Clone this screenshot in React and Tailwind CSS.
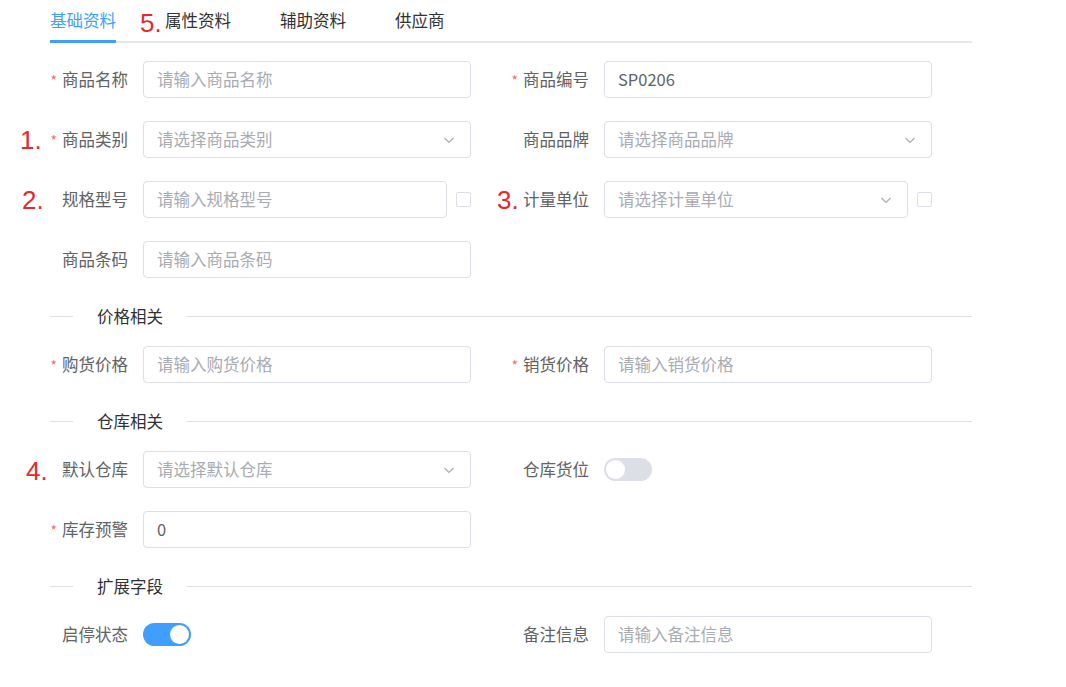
const font = { fontFamily: '"Noto Sans CJK SC", "Noto Sans", sans-serif' }

function Mark({ children, className }) {
  return (
    <span
      className={`absolute text-[26px] leading-none text-[#e8282b] ${className}`}
      style={{ fontFamily: '"Liberation Sans", Arial, sans-serif' }}
    >
      {children}
    </span>
  )
}

function Chevron() {
  return (
    <svg width="14" height="14" viewBox="0 0 14 14" className="text-[#a8abb2]">
      <polyline points="2.5,5 7,9.5 11.5,5" fill="none" stroke="currentColor" strokeWidth="1.2" />
    </svg>
  )
}

function Input({ placeholder, value, select, className = 'w-[328px]' }) {
  return (
    <div className={`${className} h-[37px] border border-[#dcdfe6] rounded-[4px] bg-white flex items-center pl-[13px] pr-[14px]`}>
      <span className={`flex-1 text-[16.5px] ${value ? 'text-[#606266]' : 'text-[#a8abb2]'}`}>
        {value || placeholder}
      </span>
      {select && <Chevron />}
    </div>
  )
}

function Checkbox() {
  return <div className="ml-[9px] w-[15px] h-[15px] border border-[#dcdfe6] rounded-[2px] bg-white" />
}

function Switch({ on }) {
  return (
    <div className={`w-[48px] h-[23px] rounded-full flex items-center px-[2px] ${on ? 'bg-[#409eff] justify-end' : 'bg-[#dcdfe6] justify-start'}`}>
      <div className="w-[19px] h-[19px] rounded-full bg-white" />
    </div>
  )
}

function Field({ label, required, mark, children }) {
  return (
    <div className="relative flex items-center h-[37px]">
      {mark}
      <div className="w-[93px] pr-[15px] text-right text-[16.5px] text-[#606266] whitespace-nowrap">
        {required && <span className="text-[#f56c6c] mr-[5px] text-[14px]">*</span>}
        {label}
      </div>
      <div className="flex items-center">{children}</div>
    </div>
  )
}

function Row({ children }) {
  return <div className="grid grid-cols-[421px_421px] gap-x-[40px] mb-[23px]">{children}</div>
}

function Divider({ title }) {
  return (
    <div className="flex items-center h-[30px] mb-[15px]">
      <div className="w-[23px] h-px bg-[#dcdfe6]" />
      <div className="px-[24px] text-[16.5px] text-[#303133]">{title}</div>
      <div className="flex-1 h-px bg-[#dcdfe6]" />
    </div>
  )
}

const tabs = ['基础资料', '属性资料', '辅助资料', '供应商']

export default function App() {
  return (
    <div className="w-[1066px] h-[687px] overflow-hidden bg-white" style={font}>
      <div className="ml-[50px] w-[922px]">
        {/* 标签页 */}
        <div className="relative flex gap-[49px] h-[43px] border-b-2 border-[#e4e7ed]">
          {tabs.map((t, i) => (
            <div
              key={t}
              className={`relative flex items-center h-[43px] -mb-[2px] text-[16.5px] ${
                i === 0 ? 'text-[#409eff] border-b-[3px] border-[#409eff] pt-[1px]' : 'text-[#303133] border-b-2 border-transparent'
              }`}
            >
              {i === 1 && <Mark className="-left-[25px] top-[10px]">5.</Mark>}
              {t}
            </div>
          ))}
        </div>

        {/* 表单 */}
        <div className="mt-[18px]">
          <Row>
            <Field label="商品名称" required>
              <Input placeholder="请输入商品名称" />
            </Field>
            <Field label="商品编号" required>
              <Input value="SP0206" />
            </Field>
          </Row>
          <Row>
            <Field label="商品类别" required mark={<Mark className="-left-[30px] top-[6px]">1.</Mark>}>
              <Input placeholder="请选择商品类别" select />
            </Field>
            <Field label="商品品牌">
              <Input placeholder="请选择商品品牌" select />
            </Field>
          </Row>
          <Row>
            <Field label="规格型号" mark={<Mark className="-left-[28px] top-[6px]">2.</Mark>}>
              <Input placeholder="请输入规格型号" className="w-[304px]" />
              <Checkbox />
            </Field>
            <Field label="计量单位" mark={<Mark className="-left-[14px] top-[6px]">3.</Mark>}>
              <Input placeholder="请选择计量单位" select className="w-[304px]" />
              <Checkbox />
            </Field>
          </Row>
          <Row>
            <Field label="商品条码">
              <Input placeholder="请输入商品条码" />
            </Field>
            <div />
          </Row>

          <Divider title="价格相关" />
          <Row>
            <Field label="购货价格" required>
              <Input placeholder="请输入购货价格" />
            </Field>
            <Field label="销货价格" required>
              <Input placeholder="请输入销货价格" />
            </Field>
          </Row>

          <Divider title="仓库相关" />
          <Row>
            <Field label="默认仓库" mark={<Mark className="-left-[24px] top-[7px]">4.</Mark>}>
              <Input placeholder="请选择默认仓库" select />
            </Field>
            <Field label="仓库货位">
              <Switch />
            </Field>
          </Row>
          <Row>
            <Field label="库存预警" required>
              <Input value="0" />
            </Field>
            <div />
          </Row>

          <Divider title="扩展字段" />
          <Row>
            <Field label="启停状态">
              <Switch on />
            </Field>
            <Field label="备注信息">
              <Input placeholder="请输入备注信息" />
            </Field>
          </Row>
        </div>
      </div>
    </div>
  )
}
